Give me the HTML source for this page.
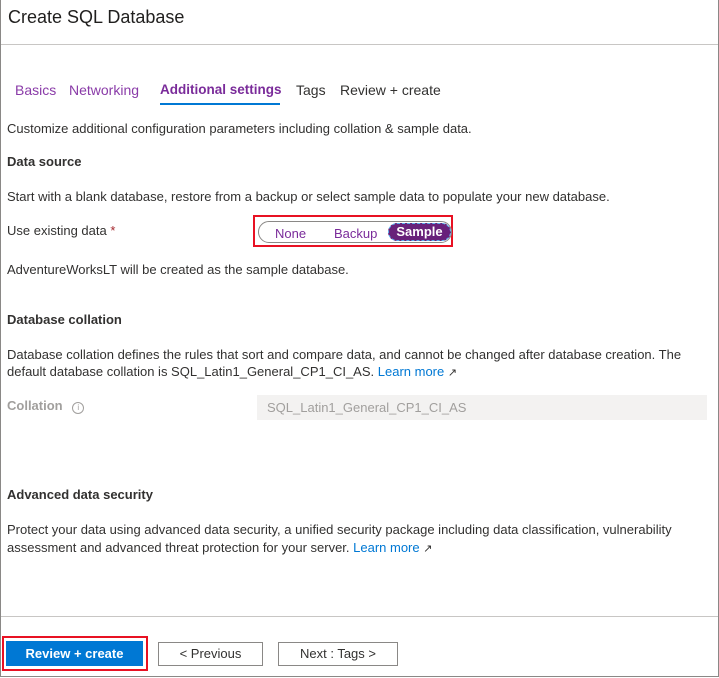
<!DOCTYPE html>
<html><head><style>
body{margin:0;width:719px;height:678px;position:relative;background:#fff;font-family:"Liberation Sans",sans-serif;font-size:13px;color:#323130;overflow:hidden}
.a{position:absolute;white-space:nowrap}
.b{font-weight:bold;font-size:13px;color:#323130}
.lk{color:#0078d4}
.tab{position:absolute;top:82px;font-size:14px}
</style></head><body>
<div class="a" style="left:0;top:0;width:717px;height:676px;border:1px solid #8a8886;border-top:none"></div>
<div class="a" style="left:8px;top:7px;font-size:18px;color:#201f1e">Create SQL Database</div>
<div class="a" style="left:1px;top:44px;width:717px;height:1px;background:#c8c6c4"></div>
<div class="tab" style="left:15px;color:#8a3ba8">Basics</div>
<div class="tab" style="left:69px;color:#8a3ba8">Networking</div>
<div class="tab" style="left:160px;color:#7a2b9a;font-weight:bold;font-size:13.5px">Additional settings</div>
<div class="a" style="left:160px;top:103px;width:120px;height:2px;background:#0078d4"></div>
<div class="tab" style="left:296px">Tags</div>
<div class="tab" style="left:340px">Review + create</div>
<div class="a" style="left:7px;top:121px">Customize additional configuration parameters including collation &amp; sample data.</div>
<div class="a b" style="left:7px;top:154px">Data source</div>
<div class="a" style="left:7px;top:189px">Start with a blank database, restore from a backup or select sample data to populate your new database.</div>
<div class="a" style="left:7px;top:223px">Use existing data <span style="color:#a4262c">*</span></div>
<div class="a" style="left:253px;top:215px;width:200px;height:32px;border:2px solid #e81123;box-sizing:border-box"></div>
<div class="a" style="left:258px;top:221px;width:194px;height:22px;border:1px solid #8a8886;border-radius:12px;box-sizing:border-box"></div>
<div class="a" style="left:275px;top:226px;color:#7a2b9a">None</div>
<div class="a" style="left:334px;top:226px;color:#7a2b9a">Backup</div>
<div class="a" style="left:388px;top:223px;width:63px;height:18px;border-radius:9px;background:#68217a;border:1px dashed #5ab0f0;box-sizing:border-box;color:#fff;text-align:center;line-height:16px;font-weight:bold">Sample</div>
<div class="a" style="left:7px;top:262px">AdventureWorksLT will be created as the sample database.</div>
<div class="a b" style="left:7px;top:312px">Database collation</div>
<div class="a" style="left:7px;top:347px">Database collation defines the rules that sort and compare data, and cannot be changed after database creation. The</div>
<div class="a" style="left:7px;top:364px">default database collation is SQL_Latin1_General_CP1_CI_AS. <span class="lk">Learn more</span> <span style="font-size:11px">&#x2197;</span></div>
<div class="a" style="left:7px;top:398px;color:#a19f9d;font-weight:bold">Collation <span style="display:inline-block;width:10px;height:10px;border:1px solid #a19f9d;border-radius:50%;font-size:8px;text-align:center;line-height:10px;font-weight:normal;margin-left:6px">i</span></div>
<div class="a" style="left:257px;top:395px;width:450px;height:25px;background:#f3f2f1;color:#a19f9d;line-height:25px;padding-left:10px;box-sizing:border-box">SQL_Latin1_General_CP1_CI_AS</div>
<div class="a b" style="left:7px;top:487px">Advanced data security</div>
<div class="a" style="left:7px;top:522px">Protect your data using advanced data security, a unified security package including data classification, vulnerability</div>
<div class="a" style="left:7px;top:540px">assessment and advanced threat protection for your server. <span class="lk">Learn more</span> <span style="font-size:11px">&#x2197;</span></div>
<div class="a" style="left:1px;top:616px;width:717px;height:1px;background:#c8c6c4"></div>
<div class="a" style="left:2px;top:636px;width:146px;height:35px;border:2px solid #e81123;box-sizing:border-box"></div>
<div class="a" style="left:6px;top:641px;width:137px;height:25px;background:#0078d4;color:#fff;font-weight:bold;text-align:center;line-height:25px">Review + create</div>
<div class="a" style="left:158px;top:642px;width:105px;height:24px;border:1px solid #8a8886;box-sizing:border-box;text-align:center;line-height:22px">&lt; Previous</div>
<div class="a" style="left:278px;top:642px;width:120px;height:24px;border:1px solid #8a8886;box-sizing:border-box;text-align:center;line-height:22px">Next : Tags &gt;</div>
</body></html>
